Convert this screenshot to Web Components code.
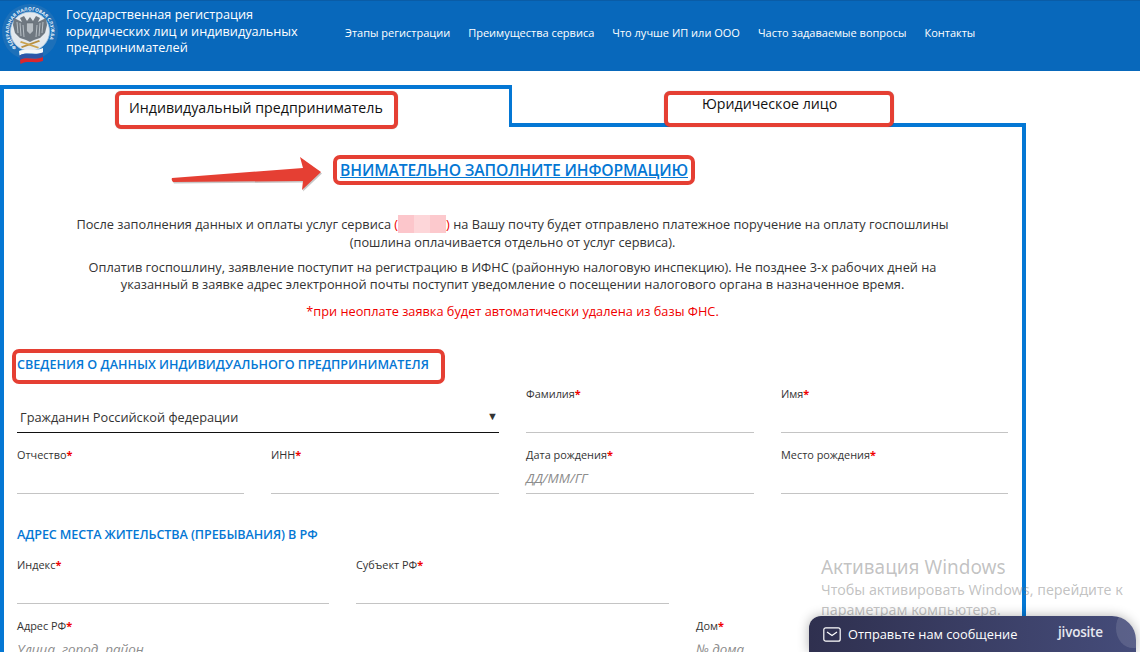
<!DOCTYPE html>
<html lang="ru">
<head>
<meta charset="utf-8">
<title>Государственная регистрация</title>
<style>
  html, body { margin: 0; height: 652px; overflow: hidden; background: #fff; }
  body { font-family: "Open Sans", "Noto Sans", sans-serif; color: #333; position: relative; }
</style>
</head>
<body>
<app-header>
  <nav-link>Этапы регистрации</nav-link>
  <nav-link>Преимущества сервиса</nav-link>
  <nav-link>Что лучше ИП или ООО</nav-link>
  <nav-link>Часто задаваемые вопросы</nav-link>
  <nav-link>Контакты</nav-link>
</app-header>

<form-tabs>
  <mark-box slot="first" style="--w:283px;--h:38px;--pl:10px;--ty:-3px">Индивидуальный предприниматель</mark-box>
  <mark-box slot="second" style="--w:230px;--h:36px;--pl:34px;--ty:-6px">Юридическое лицо</mark-box>
</form-tabs>

<form-panel>
  <notice-block></notice-block>

  <section-title boxed>СВЕДЕНИЯ О ДАННЫХ ИНДИВИДУАЛЬНОГО ПРЕДПРИНИМАТЕЛЯ</section-title>
  <form-row cols="227px 228px 228px 227px" style="margin-top:2px">
    <select-field style="grid-column:span 2">Гражданин Российской федерации</select-field>
    <form-field label="Фамилия"></form-field>
    <form-field label="Имя"></form-field>
    <form-field label="Отчество"></form-field>
    <form-field label="ИНН"></form-field>
    <form-field label="Дата рождения" hint="ДД/ММ/ГГ"></form-field>
    <form-field label="Место рождения"></form-field>
  </form-row>

  <section-title>АДРЕС МЕСТА ЖИТЕЛЬСТВА (ПРЕБЫВАНИЯ) В РФ</section-title>
  <form-row cols="312px 313px 312px" style="margin-top:14px">
    <form-field label="Индекс"></form-field>
    <form-field label="Субъект РФ"></form-field>
    <span></span>
    <form-field label="Адрес РФ" hint="Улица, город, район" style="grid-column:span 2"></form-field>
    <form-field label="Дом" hint="№ дома"></form-field>
  </form-row>
</form-panel>

<win-watermark></win-watermark>
<chat-widget></chat-widget>

<script>
class AppHeader extends HTMLElement {
  constructor() {
    super();
    const shadow = this.attachShadow({ mode: 'open' });
    shadow.innerHTML = `
    <style>
    :host {
      display: flex;
      height: 71px;
      box-sizing: border-box;
      background: #0868bb;
      border-top: 1px solid #0a5ca6;
      color: #fff;
    }
    .logo { width: 58px; height: 66px; margin: 2px 0 0 2px; flex: none; }
    .title {
      width: 270px;
      margin: 5px 0 0 6px;
      font-size: 12.7px;
      line-height: 16.6px;
      flex: none;
    }
    nav { display: flex; gap: 18px; margin: 25px 0 0 9px; align-items: flex-start; }
    </style>
    <svg class="logo" viewBox="0 0 58 66">
      <defs><path id="ring" d="M14.5 44.6 A21 21 0 1 1 41.5 44.6"/></defs>
      <circle cx="28" cy="29" r="28" fill="#1d70b9"/>
      <circle cx="28" cy="28.500" r="19.500" fill="#e4e9ee" stroke="#9fc3df" stroke-width=".8"/>
      <text font-family="Open Sans, sans-serif" font-size="4.7" font-weight="700" fill="#eef4f9" letter-spacing=".12">
        <textPath href="#ring">ФЕДЕРАЛЬНАЯ НАЛОГОВАЯ СЛУЖБА</textPath>
      </text>
      <!-- eagle: wings, heads, shield -->
      <path d="M25 18 L22 13 L18 15 L20 19 L12 15 L11 22 L13 30 L18 35 L24 37 L28 39 L32 37 L38 35 L43 30 L45 22 L44 15 L36 19 L38 15 L34 13 L31 18 L28 14z" fill="#6f7881"/>
      <path d="M15 19 L16 30 M18 20 L19 33 M21 22 L22 34 M41 19 L40 30 M38 20 L37 33 M35 22 L34 34" stroke="#c9d0d6" stroke-width=".8"/>
      <path d="M24.500 20 h7 v8 l-3.500 3.500 l-3.500 -3.500z" fill="#b7bec4" stroke="#565e66" stroke-width=".5"/>
      <!-- crossed gold branches -->
      <path d="M19 43.500 L37 37 L38 38.500 L20 45z" fill="#b98f3e"/>
      <path d="M19 38 L37 44 L36 45.500 L18 39.500z" fill="#c9a24e"/>
      <!-- flag -->
      <path d="M17 48 c8 -3 15 1 24 -3 v4.500 c-8 3 -16 -1 -23.500 3z" fill="#f6f8fa"/>
      <path d="M17.500 52.500 c7.500 -4 15 1 23.500 -3 v4.500 c-8 3 -15 -1 -23 3z" fill="#2c56a8"/>
      <path d="M18 57 c8 -4 15 1 23 -3 v4 c-8 3 -15 -1 -22.500 3z" fill="#d8272e"/>
    </svg>
    <div class="title">Государственная регистрация<br>юридических лиц и индивидуальных<br>предпринимателей</div>
    <nav><slot></slot></nav>
    `;
  }
}

class NavLink extends HTMLElement {
  constructor() {
    super();
    const shadow = this.attachShadow({ mode: 'open' });
    shadow.innerHTML = `
    <style>
    :host { display: block; font-size: 11px; line-height: 14px; color: #fff; white-space: nowrap; }
    </style>
    <slot></slot>
    `;
  }
}

class MarkBox extends HTMLElement {
  constructor() {
    super();
    const shadow = this.attachShadow({ mode: 'open' });
    shadow.innerHTML = `
    <style>
    :host {
      display: flex;
      align-items: center;
      box-sizing: border-box;
      width: var(--w, auto);
      height: var(--h, auto);
      padding-left: var(--pl, 0);
      background: #fff;
      border: 4px solid #e53f33;
      border-radius: 6px;
      box-shadow: 0 0 1px rgba(0, 0, 0, .35);
      font-size: 14.2px;
      color: #111;
      white-space: nowrap;
    }
    span { position: relative; top: var(--ty, 0); }
    </style>
    <span><slot></slot></span>
    `;
  }
}

class FormTabs extends HTMLElement {
  constructor() {
    super();
    const shadow = this.attachShadow({ mode: 'open' });
    shadow.innerHTML = `
    <style>
    :host {
      display: grid;
      grid-template-columns: 512px 514px;
      grid-template-rows: 42px;
      width: 1026px;
      height: 42px;
      margin-top: 14px;
      box-sizing: border-box;
    }
    .first {
      box-sizing: border-box;
      border: 4px solid #0477d4;
      border-bottom: 0;
      border-right-width: 3px;
      padding: 2px 0 0 111px;
      position: relative;
      z-index: 1;
    }
    .second {
      box-sizing: border-box;
      border-bottom: 4px solid #0477d4;
      padding: 6px 0 0 153px;
      margin-left: -1px;
    }
    ::slotted(mark-box) { position: relative; }
    </style>
    <div class="first"><slot name="first"></slot></div>
    <div class="second"><slot name="second"></slot></div>
    `;
  }
}

class FormPanel extends HTMLElement {
  constructor() {
    super();
    const shadow = this.attachShadow({ mode: 'open' });
    shadow.innerHTML = `
    <style>
    :host {
      display: block;
      box-sizing: border-box;
      width: 1026px;
      height: 530px;
      padding: 0 14px 0 13px;
      border-left: 4px solid #0477d4;
      border-right: 4px solid #0477d4;
      overflow: hidden;
      position: relative;
      margin-top: -1px;
    }
    </style>
    <slot></slot>
    `;
  }
}

class NoticeBlock extends HTMLElement {
  constructor() {
    super();
    const shadow = this.attachShadow({ mode: 'open' });
    shadow.innerHTML = `
    <style>
    :host { display: block; text-align: center; font-size: 12.78px; line-height: 18px; color: #333; padding-top: 29px; }
    .head-row { display: flex; justify-content: center; padding-left: 3px; }
    .head {
      display: block;
      box-sizing: border-box;
      width: 362px;
      height: 30px;
      border: 4px solid #e53f33;
      border-radius: 7px;
      font-size: 15.7px;
      font-weight: 600;
      line-height: 23px;
      color: #0477d4;
      text-decoration: underline;
      white-space: nowrap;
      letter-spacing: -.15px;
    }
    .arrow { position: absolute; left: 165px; top: 28px; width: 170px; height: 40px; overflow: visible; }
    p { margin: 0; }
    .one { margin-top: 30px; }
    .two { margin-top: 8px; line-height: 17px; }
    .red { margin-top: 9px; color: #f00000; }
    .blur {
      display: inline-block;
      width: 48px;
      height: 18px;
      vertical-align: top;
      background: linear-gradient(90deg, #fcc6cb 0 33%, #fdd6d9 33% 66%, #fcc9cd 66%);
    }
    .paren { color: #f00000; }
    </style>
    <svg class="arrow" viewBox="0 0 170 40">
      <path d="M3 24 L134 14 L131 3 L152 18 L133 36 L134 27 L4 28 Q2 26 3 24z" fill="rgba(0,0,0,.22)" transform="translate(1 1.5)"/>
      <path d="M3 24 L134 14 L131 3 L152 18 L133 36 L134 27 L4 28 Q2 26 3 24z" fill="#e53f33"/>
    </svg>
    <div class="head-row"><span class="head">ВНИМАТЕЛЬНО ЗАПОЛНИТЕ ИНФОРМАЦИЮ</span></div>
    <p class="one">После заполнения данных и оплаты услуг сервиса <span class="paren">(</span><span class="blur"></span><span class="paren">)</span> на Вашу почту будет отправлено платежное поручение на оплату госпошлины<br>(пошлина оплачивается отдельно от услуг сервиса).</p>
    <p class="two">Оплатив госпошлину, заявление поступит на регистрацию в ИФНС (районную налоговую инспекцию). Не позднее 3-х рабочих дней на<br>указанный в заявке адрес электронной почты поступит уведомление о посещении налогового органа в назначенное время.</p>
    <p class="red">*при неоплате заявка будет автоматически удалена из базы ФНС.</p>
    `;
  }
}

class SectionTitle extends HTMLElement {
  constructor() {
    super();
    const shadow = this.attachShadow({ mode: 'open' });
    const boxed = this.hasAttribute('boxed');
    shadow.innerHTML = `
    <style>
    :host {
      display: block;
      font-size: 12.6px;
      font-weight: 600;
      color: #0477d4;
      white-space: nowrap;
      line-height: 16px;
    }
    .boxed {
      box-sizing: border-box;
      width: 433px;
      height: 35px;
      margin: 29px 0 0 -5px;
      padding: 4px 0 0 1px;
      border: 4px solid #e53f33;
      border-radius: 7px;
    }
    .plain { margin-top: 33px; letter-spacing: -.1px; }
    </style>
    <div class="${boxed ? 'boxed' : 'plain'}"><slot></slot></div>
    `;
  }
}

class FormRow extends HTMLElement {
  constructor() {
    super();
    const cols = this.getAttribute('cols') || '1fr';
    const shadow = this.attachShadow({ mode: 'open' });
    shadow.innerHTML = `
    <style>
    :host {
      display: grid;
      grid-template-columns: ${cols};
      column-gap: 27px;
      row-gap: 14px;
    }
    </style>
    <slot></slot>
    `;
  }
}

class FormField extends HTMLElement {
  constructor() {
    super();
    const label = this.getAttribute('label') || '';
    const hint = this.getAttribute('hint') || '';
    const shadow = this.attachShadow({ mode: 'open' });
    shadow.innerHTML = `
    <style>
    :host { display: block; font-size: 10.9px; color: #333; }
    label { display: block; line-height: 16px; height: 16px; white-space: nowrap; }
    b { color: #f00000; font-weight: 700; }
    .input {
      height: 31px;
      box-sizing: border-box;
      padding: 6px 0 0 0;
      border-bottom: 1px solid #c4c4c4;
      font-size: 13.4px;
      line-height: 18px;
      font-style: italic;
      color: #8c8c8c;
      white-space: nowrap;
    }
    </style>
    <label>${label}<b>*</b></label>
    <div class="input">${hint}</div>
    `;
  }
}

class SelectField extends HTMLElement {
  constructor() {
    super();
    const shadow = this.attachShadow({ mode: 'open' });
    shadow.innerHTML = `
    <style>
    :host {
      display: flex;
      align-items: flex-end;
      justify-content: space-between;
      box-sizing: border-box;
      height: 47px;
      padding: 0 1px 6px 3px;
      border-bottom: 1px solid #111;
      font-size: 12.75px;
      line-height: 18px;
      color: #333;
      white-space: nowrap;
    }
    i { font-style: normal; font-size: 11px; line-height: 12px; align-self: flex-end; margin-bottom: 4px; color: #333; }
    </style>
    <span><slot></slot></span><i>▼</i>
    `;
  }
}

class WinWatermark extends HTMLElement {
  constructor() {
    super();
    const shadow = this.attachShadow({ mode: 'open' });
    shadow.innerHTML = `
    <style>
    :host {
      position: absolute;
      left: 821px;
      top: 554px;
      font-family: "Noto Sans", "Open Sans", sans-serif;
      color: rgba(120, 120, 120, .45);
      font-size: 14.35px;
      line-height: 20px;
      white-space: nowrap;
    }
    .big { font-size: 19px; line-height: 26px; }
    </style>
    <div class="big">Активация Windows</div>
    <div>Чтобы активировать Windows, перейдите к</div>
    <div>параметрам компьютера.</div>
    `;
  }
}

class ChatWidget extends HTMLElement {
  constructor() {
    super();
    const shadow = this.attachShadow({ mode: 'open' });
    shadow.innerHTML = `
    <style>
    :host {
      position: absolute;
      left: 809px;
      top: 616px;
      width: 327px;
      height: 36px;
      box-sizing: border-box;
      display: flex;
      align-items: center;
      padding: 0 0 0 14px;
      border-radius: 12px 24px 0 0;
      background: linear-gradient(90deg, #2f304f, #454c7a);
      box-shadow: 0 0 12px rgba(0, 0, 0, .3);
      color: #fff;
      font-size: 12.8px;
      overflow: hidden;
    }
    svg { width: 18px; height: 15px; flex: none; margin-right: 7px; }
    .brand { position: absolute; left: 249px; top: 7px; font-size: 13.5px; font-weight: 600; color: #e6e7ef; letter-spacing: -.2px; }
    .glow { position: absolute; right: -14px; top: -8px; width: 34px; height: 40px; border-radius: 50%; background: rgba(255, 255, 255, .12); }
    </style>
    <svg viewBox="0 0 18 15" fill="none" stroke="#fff" stroke-width="1.2">
      <rect x=".8" y=".8" width="16.4" height="13.4" rx="2"/>
      <path d="M4 5l5 3.500L14 5"/>
    </svg>
    <span>Отправьте нам сообщение</span>
    <span class="brand">jivosite</span>
    <span class="glow"></span>
    `;
  }
}

customElements.define('app-header', AppHeader);
customElements.define('nav-link', NavLink);
customElements.define('mark-box', MarkBox);
customElements.define('form-tabs', FormTabs);
customElements.define('form-panel', FormPanel);
customElements.define('notice-block', NoticeBlock);
customElements.define('section-title', SectionTitle);
customElements.define('form-row', FormRow);
customElements.define('form-field', FormField);
customElements.define('select-field', SelectField);
customElements.define('win-watermark', WinWatermark);
customElements.define('chat-widget', ChatWidget);
</script>
</body>
</html>
